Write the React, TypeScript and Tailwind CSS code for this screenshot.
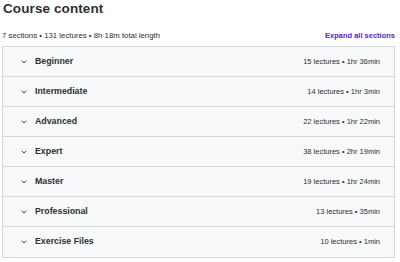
import React from "react";

const sections = [
  { title: "Beginner", meta: "15 lectures • 1hr 36min" },
  { title: "Intermediate", meta: "14 lectures • 1hr 3min" },
  { title: "Advanced", meta: "22 lectures • 1hr 22min" },
  { title: "Expert", meta: "38 lectures • 2hr 19min" },
  { title: "Master", meta: "19 lectures • 1hr 24min" },
  { title: "Professional", meta: "13 lectures • 35min" },
  { title: "Exercise Files", meta: "10 lectures • 1min" },
];

function Chevron() {
  return (
    <svg width="6" height="4" viewBox="0 0 6 4" fill="none" className="shrink-0">
      <path d="M1 1 L3 3 L5 1" stroke="#2d2f31" strokeWidth="0.9" strokeLinecap="round" strokeLinejoin="round" />
    </svg>
  );
}

export default function App() {
  return (
    <div
      className="w-[400px] h-[262px] overflow-hidden bg-white text-[#2d2f31]"
      style={{ fontFamily: '"Liberation Sans", Arial, sans-serif' }}
    >
      <h2 className="pl-[3px] pt-[2px] text-[13.5px] leading-[14px] font-bold tracking-[0.1px]">Course content</h2>
      <div className="flex items-center justify-between pl-[2px] pr-[5px] mt-[15px] h-[10px]">
        <span className="text-[7.8px] leading-[10px] text-[#2d2f31]">
          7 sections • 131 lectures • 8h 18m total length
        </span>
        <span className="text-[7.5px] leading-[10px] font-bold text-[#5624d0]">Expand all sections</span>
      </div>
      <div className="ml-[2px] mt-[5px] w-[393px] border border-[#d1d7dc] divide-y divide-[#d1d7dc]">
        {sections.map((s) => (
          <div key={s.title} className="h-[30px] bg-[#f7f9fa] flex items-center pl-[18px] pr-[14px]">
            <Chevron />
            <span className="ml-[8px] text-[8.8px] font-bold">{s.title}</span>
            <span className="ml-auto text-[7.5px] text-[#2d2f31]">{s.meta}</span>
          </div>
        ))}
      </div>
    </div>
  );
}
